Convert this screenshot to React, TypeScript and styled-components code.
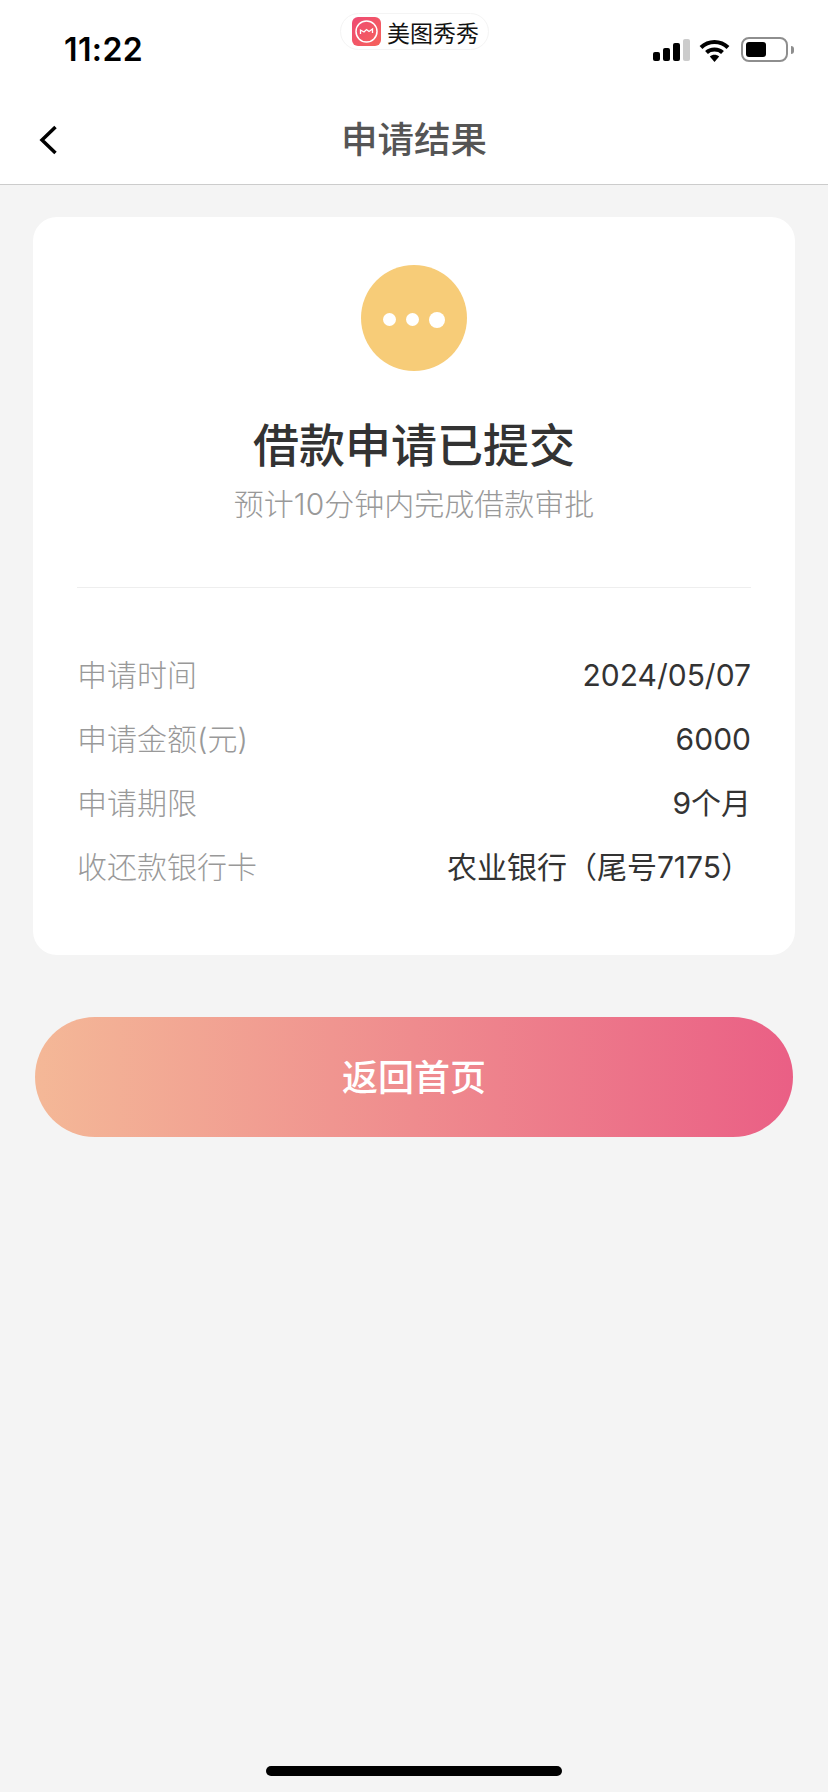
import React from 'react';
import styled, { createGlobalStyle } from 'styled-components';

const GlobalStyle = createGlobalStyle`
  html, body {
    margin: 0;
    padding: 0;
    background: #f4f4f4;
    font-family: Inter, "Noto Sans CJK SC", sans-serif;
  }
  * {
    box-sizing: border-box;
  }
`;

const Page = styled.div`
  width: 828px;
  height: 1792px;
  display: flex;
  flex-direction: column;
  overflow: hidden;
  background: #f4f4f4;
`;

const Header = styled.header`
  background: #fff;
  border-bottom: 1px solid #ccc;
`;

const StatusBar = styled.div`
  position: relative;
  height: 88px;
  padding: 28px 34px 0 64px;
  display: flex;
  justify-content: space-between;
  align-items: flex-start;
`;

const Time = styled.span`
  font-size: 32px;
  line-height: 44px;
  font-weight: 600;
  letter-spacing: 0.4px;
  color: #000;
`;

const AppPill = styled.div`
  position: absolute;
  left: 340px;
  top: 13px;
  width: 149px;
  height: 37px;
  padding-left: 11px;
  display: flex;
  align-items: center;
  gap: 6px;
  border: 1px solid #f4f4f4;
  border-radius: 19px;
  background: #fff;
`;

const AppName = styled.span`
  font-family: "Noto Sans CJK SC", sans-serif;
  font-size: 23px;
  line-height: 28px;
  color: #111;
`;

const StatusIcons = styled.div`
  display: flex;
  align-items: flex-end;
  gap: 9px;
  padding-top: 9px;
`;

const Signal = styled.div`
  display: flex;
  align-items: flex-end;
  gap: 3px;
  height: 24px;
  padding-bottom: 1px;
`;

const SignalBar = styled.span<{ $height: number; $off?: boolean }>`
  width: 7px;
  height: ${props => props.$height}px;
  border-radius: 2px;
  background: ${props => (props.$off ? '#ccc' : '#000')};
`;

const Battery = styled.div`
  margin-left: 2px;
  display: flex;
  align-items: center;
  gap: 3px;
`;

const BatteryBody = styled.div`
  width: 47px;
  height: 25px;
  padding: 3px;
  border: 2px solid #8e8e8e;
  border-radius: 8px;
`;

const BatteryFill = styled.div`
  width: 20px;
  height: 100%;
  border-radius: 3px;
  background: #000;
`;

const BatteryNub = styled.span`
  width: 3px;
  height: 8px;
  border-radius: 0 3px 3px 0;
  background: #8e8e8e;
`;

const NavBar = styled.div`
  position: relative;
  height: 96px;
  display: flex;
  align-items: center;
  justify-content: center;
`;

const BackButton = styled.button`
  position: absolute;
  left: 38px;
  top: 36px;
  width: 22px;
  height: 32px;
  padding: 0;
  border: 0;
  background: none;
  display: flex;
`;

const NavTitle = styled.h1`
  margin: 4px 0 0;
  font-family: "Noto Sans CJK SC", sans-serif;
  font-size: 36.5px;
  line-height: 48px;
  font-weight: 500;
  color: #555;
`;

const Content = styled.main`
  padding: 32px 33px 0;
  display: flex;
  flex-direction: column;
  flex: 1;
`;

const Card = styled.section`
  height: 738px;
  padding: 48px 44px 0;
  border-radius: 24px;
  background: #fff;
`;

const Summary = styled.div`
  display: flex;
  flex-direction: column;
  align-items: center;
  height: 323px;
  border-bottom: 1px solid #eee;
`;

const PendingBadge = styled.div`
  width: 106px;
  height: 106px;
  padding-top: 3px;
  border-radius: 50%;
  background: #f7cc78;
  display: flex;
  align-items: center;
  justify-content: center;
  gap: 10px;
`;

const Dot = styled.span<{ $size: number }>`
  width: ${props => props.$size}px;
  height: ${props => props.$size}px;
  border-radius: 50%;
  background: #fff;
`;

const ResultTitle = styled.h2`
  margin: 38px 0 0;
  font-family: "Noto Sans CJK SC", sans-serif;
  font-size: 46px;
  line-height: 66px;
  font-weight: 500;
  color: #333;
`;

const ResultHint = styled.p`
  margin: 9px 0 0;
  font-size: 30px;
  line-height: 40px;
  font-weight: 300;
  color: #999;
`;

const Details = styled.dl`
  margin: 0;
  padding-top: 67px;
  display: flex;
  flex-direction: column;
  gap: 24px;
`;

const DetailRow = styled.div`
  display: flex;
  justify-content: space-between;
  align-items: center;
  height: 40px;
`;

const DetailLabel = styled.dt`
  font-size: 30px;
  line-height: 40px;
  font-weight: 300;
  color: #999;
`;

const DetailValue = styled.dd`
  margin: 0;
  font-size: 30px;
  line-height: 40px;
  font-weight: 400;
  color: #333;
`;

const HomeButton = styled.button`
  margin: 62px 2px 0;
  height: 120px;
  padding: 0 0 5px;
  border: 0;
  border-radius: 60px;
  background: linear-gradient(90deg, #f4b897 0%, #ea5f85 100%);
  font-family: "Noto Sans CJK SC", sans-serif;
  font-size: 36px;
  font-weight: 500;
  color: #fff;
`;

const HomeIndicator = styled.div`
  margin: auto auto 16px;
  width: 296px;
  height: 10px;
  border-radius: 5px;
  background: #000;
`;

const details = [
  { label: '申请时间', value: '2024/05/07' },
  { label: '申请金额(元)', value: '6000' },
  { label: '申请期限', value: '9个月' },
  { label: '收还款银行卡', value: '农业银行（尾号7175）' },
];

const AppLogo = () => (
  <svg width="29" height="29" viewBox="0 0 29 29">
    <defs>
      <linearGradient id="logoFill" x1="0" y1="0" x2="1" y2="1">
        <stop offset="0" stopColor="#ee4a74" />
        <stop offset="1" stopColor="#f6625a" />
      </linearGradient>
    </defs>
    <rect width="29" height="29" rx="6" fill="url(#logoFill)" />
    <circle cx="14.5" cy="14.5" r="10.5" fill="none" stroke="#fff" strokeWidth="1.5" />
    <path d="M8.5 17v-4l3.5 2 2.5-2.5 2.5 2 3.500-2.500v4" fill="none" stroke="#fff" strokeWidth="1.3" />
  </svg>
);

const WifiIcon = () => (
  <svg width="31" height="24" viewBox="0 0 31 24">
    <path d="M2 9.500C9.500 2 21.500 2 29 9.500" fill="none" stroke="#000" strokeWidth="4" />
    <path d="M7.500 14.500C11.500 10.500 19.500 10.500 23.500 14.500" fill="none" stroke="#000" strokeWidth="4" />
    <path d="M10.800 18.500C13.500 16.200 17.500 16.200 20.200 18.500L15.500 24Z" fill="#000" />
  </svg>
);

const BackIcon = () => (
  <svg width="22" height="32" viewBox="0 0 22 32">
    <path d="M17.500 3L4 16l13.500 13" fill="none" stroke="#000" strokeWidth="3.500" />
  </svg>
);

export default function App() {
  return (
    <Page>
      <GlobalStyle />
      <Header>
        <StatusBar>
          <Time>11:22</Time>
          <AppPill>
            <AppLogo />
            <AppName>美图秀秀</AppName>
          </AppPill>
          <StatusIcons>
            <Signal>
              <SignalBar $height={9} />
              <SignalBar $height={13} />
              <SignalBar $height={18} />
              <SignalBar $height={22} $off />
            </Signal>
            <WifiIcon />
            <Battery>
              <BatteryBody>
                <BatteryFill />
              </BatteryBody>
              <BatteryNub />
            </Battery>
          </StatusIcons>
        </StatusBar>
        <NavBar>
          <BackButton aria-label="返回">
            <BackIcon />
          </BackButton>
          <NavTitle>申请结果</NavTitle>
        </NavBar>
      </Header>
      <Content>
        <Card>
          <Summary>
            <PendingBadge>
              <Dot $size={13} />
              <Dot $size={13} />
              <Dot $size={16} />
            </PendingBadge>
            <ResultTitle>借款申请已提交</ResultTitle>
            <ResultHint>预计10分钟内完成借款审批</ResultHint>
          </Summary>
          <Details>
            {details.map(item => (
              <DetailRow key={item.label}>
                <DetailLabel>{item.label}</DetailLabel>
                <DetailValue>{item.value}</DetailValue>
              </DetailRow>
            ))}
          </Details>
        </Card>
        <HomeButton>返回首页</HomeButton>
        <HomeIndicator />
      </Content>
    </Page>
  );
}
